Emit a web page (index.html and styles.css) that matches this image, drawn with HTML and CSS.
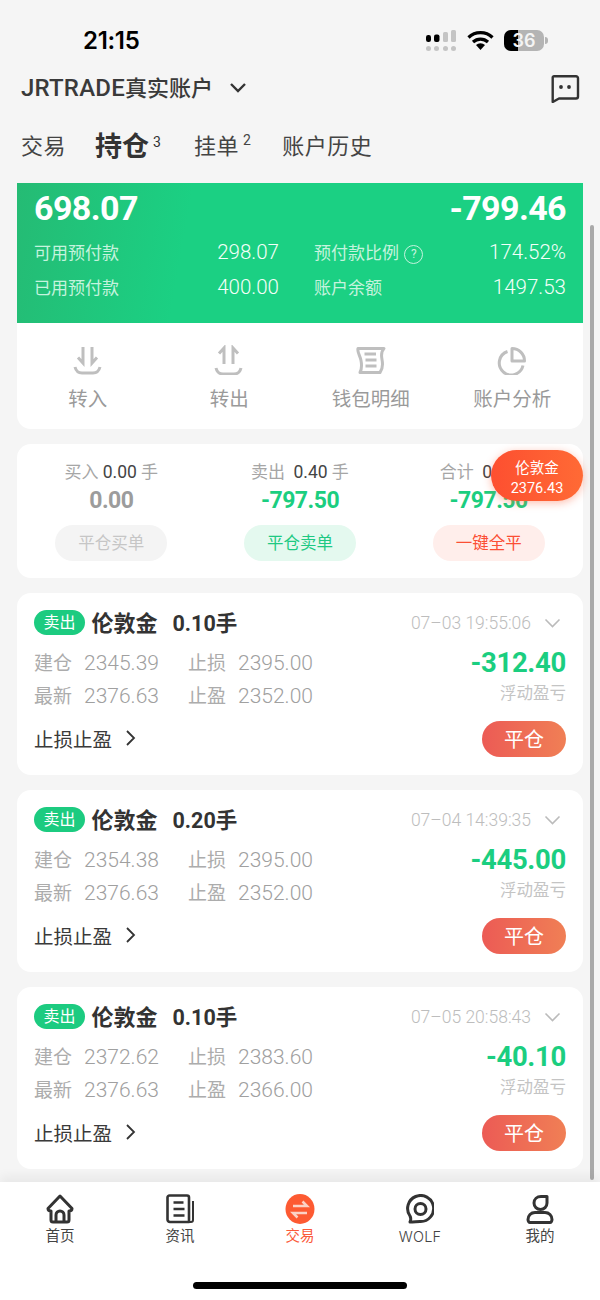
FILE: index.html
```html
<!DOCTYPE html>
<html lang="zh">
<head>
<meta charset="utf-8">
<title>JRTRADE</title>
<link rel="stylesheet" href="styles.css">
</head>
<body>
<div class="phone">
  <div class="status">
    <span class="time">21:15</span>
    <div class="status-icons">
      <svg class="signal" width="30" height="21" viewBox="0 0 30 21"><g fill="#000"><rect x="0" y="5" width="5" height="7" rx="2.200"/><rect x="8" y="4.500" width="5.500" height="7.500" rx="2"/></g><g fill="#c4c4c4"><rect x="17" y="2" width="5" height="10" rx="1.500"/><rect x="25" y="0" width="5" height="12" rx="1.500"/><circle cx="2.500" cy="18.500" r="2.500"/><circle cx="10.500" cy="18.500" r="2.500"/><circle cx="19.500" cy="18.500" r="2.500"/><circle cx="27.500" cy="18.500" r="2.500"/></g></svg>
      <svg class="wifi" width="27" height="20" viewBox="0 0 27 20"><path d="M1.500 7.500a17 17 0 0 1 24 0M6 12a11 11 0 0 1 15 0" fill="none" stroke="#000" stroke-width="3.200"/><path d="M9 15a6.500 6.500 0 0 1 9 0l-4.500 5z" fill="#000"/></svg>
      <div class="battery"><span class="battery-fill"></span><span class="battery-num">36</span></div><span class="battery-cap"></span>
    </div>
  </div>

  <header class="account">
    <div class="account-name"><span class="account-text"><span class="brand">JRTRADE</span>真实账户</span>
      <svg width="18" height="12" viewBox="0 0 18 12"><path d="M2 2l7 7 7-7" fill="none" stroke="#333" stroke-width="2.400"/></svg>
    </div>
    <svg width="30" height="30" viewBox="0 0 30 30"><path d="M4 3.200h22a2 2 0 0 1 2 2v18.300a2 2 0 0 1-2 2H9l-6.300 3.500V4.500a1.300 1.300 0 0 1 1.300-1.300z" fill="none" stroke="#333" stroke-width="2.400" stroke-linejoin="round"/><circle cx="11" cy="14" r="1.900" fill="#333"/><circle cx="19" cy="14" r="1.900" fill="#333"/></svg>
  </header>

  <nav class="tabs">
    <span class="tab">交易</span>
    <span class="tab tab-active">持仓<sup>3</sup></span>
    <span class="tab tab-pending">挂单<sup>2</sup></span>
    <span class="tab">账户历史</span>
  </nav>

  <main class="content">
    <section class="account-card">
      <div class="green">
        <div class="green-top"><span>698.07</span><span>-799.46</span></div>
        <div class="stats">
          <div class="stat"><span class="stat-label">可用预付款</span><span>298.07</span></div>
          <div class="stat"><span class="stat-label">预付款比例 <i class="help">?</i></span><span>174.52%</span></div>
          <div class="stat"><span class="stat-label">已用预付款</span><span>400.00</span></div>
          <div class="stat"><span class="stat-label">账户余额</span><span>1497.53</span></div>
        </div>
      </div>
      <div class="actions">
        <div class="action">
          <svg width="30" height="30" viewBox="0 0 30 30" fill="none" stroke="#bfbfbf" stroke-width="3"><path d="M2 22c1 4 4 6 7 6h11c3 0 6-2 7-6"/><path d="M10 2v16L5 12.500M19 2v16l5-5.500"/></svg>
          <span>转入</span>
        </div>
        <div class="action">
          <svg width="30" height="30" viewBox="0 0 30 30" fill="none" stroke="#bfbfbf" stroke-width="3"><path d="M2 23c1 4 4 6 7 6h11c3 0 6-2 7-6"/><path d="M10 19V3L5 8.500M19 19V3l5 5.500"/></svg>
          <span>转出</span>
        </div>
        <div class="action">
          <svg width="30" height="30" viewBox="0 0 30 30" fill="none" stroke="#bfbfbf" stroke-width="3" stroke-linejoin="round"><path d="M2 3.500h26c-3 3-3 6-2 11s1 9-2 13H4c2-4 2-7 1-12S1 7 2 3.500z"/><path d="M8.500 9h11.500M9.500 15h11M9.500 21h11"/></svg>
          <span>钱包明细</span>
        </div>
        <div class="action">
          <svg width="30" height="30" viewBox="0 0 30 30" fill="none" stroke="#bfbfbf" stroke-width="3" stroke-linejoin="round"><path d="M10.500 6.500a12 12 0 1 0 15.500 14"/><path d="M15 3.500a12.500 12.500 0 0 1 12.500 12.500H15z"/></svg>
          <span>账户分析</span>
        </div>
      </div>
    </section>

    <section class="summary">
      <div class="sum-col">
        <div class="sum-title">买入 <b>0.00</b> 手</div>
        <div class="sum-value sum-grey">0.00</div>
        <div class="sum-btn btn-grey">平仓买单</div>
      </div>
      <div class="sum-col">
        <div class="sum-title">卖出&nbsp; <b>0.40</b> 手</div>
        <div class="sum-value">-797.50</div>
        <div class="sum-btn btn-green">平仓卖单</div>
      </div>
      <div class="sum-col">
        <div class="sum-title">合计&nbsp; <b>0.40</b> 手</div>
        <div class="sum-value">-797.50</div>
        <div class="sum-btn btn-red">一键全平</div>
      </div>
      <div class="float-quote"><span>伦敦金</span><span>2376.43</span></div>
    </section>

    <article class="order">
      <div class="order-head">
        <span class="tag">卖出</span><span class="order-name">伦敦金</span><span class="order-lot">0.10手</span>
        <span class="order-time">07–03 19:55:06</span>
        <svg class="order-chevron" width="17" height="10" viewBox="0 0 17 10"><path d="M1.500 1.500l7 7 7-7" fill="none" stroke="#bbb" stroke-width="1.600"/></svg>
      </div>
      <div class="order-body">
        <div class="order-grid">
          <span><em>建仓</em>2345.39</span><span><em>止损</em>2395.00</span>
          <span><em>最新</em>2376.63</span><span><em>止盈</em>2352.00</span>
        </div>
        <div class="order-pl"><strong>-312.40</strong><span>浮动盈亏</span></div>
      </div>
      <div class="order-foot">
        <span class="sl">止损止盈<svg width="12" height="18" viewBox="0 0 12 18"><path d="M2 2l7 7-7 7" fill="none" stroke="#333" stroke-width="1.800"/></svg></span>
        <span class="close-btn">平仓</span>
      </div>
    </article>

    <article class="order">
      <div class="order-head">
        <span class="tag">卖出</span><span class="order-name">伦敦金</span><span class="order-lot">0.20手</span>
        <span class="order-time">07–04 14:39:35</span>
        <svg class="order-chevron" width="17" height="10" viewBox="0 0 17 10"><path d="M1.500 1.500l7 7 7-7" fill="none" stroke="#bbb" stroke-width="1.600"/></svg>
      </div>
      <div class="order-body">
        <div class="order-grid">
          <span><em>建仓</em>2354.38</span><span><em>止损</em>2395.00</span>
          <span><em>最新</em>2376.63</span><span><em>止盈</em>2352.00</span>
        </div>
        <div class="order-pl"><strong>-445.00</strong><span>浮动盈亏</span></div>
      </div>
      <div class="order-foot">
        <span class="sl">止损止盈<svg width="12" height="18" viewBox="0 0 12 18"><path d="M2 2l7 7-7 7" fill="none" stroke="#333" stroke-width="1.800"/></svg></span>
        <span class="close-btn">平仓</span>
      </div>
    </article>

    <article class="order">
      <div class="order-head">
        <span class="tag">卖出</span><span class="order-name">伦敦金</span><span class="order-lot">0.10手</span>
        <span class="order-time">07–05 20:58:43</span>
        <svg class="order-chevron" width="17" height="10" viewBox="0 0 17 10"><path d="M1.500 1.500l7 7 7-7" fill="none" stroke="#bbb" stroke-width="1.600"/></svg>
      </div>
      <div class="order-body">
        <div class="order-grid">
          <span><em>建仓</em>2372.62</span><span><em>止损</em>2383.60</span>
          <span><em>最新</em>2376.63</span><span><em>止盈</em>2366.00</span>
        </div>
        <div class="order-pl"><strong>-40.10</strong><span>浮动盈亏</span></div>
      </div>
      <div class="order-foot">
        <span class="sl">止损止盈<svg width="12" height="18" viewBox="0 0 12 18"><path d="M2 2l7 7-7 7" fill="none" stroke="#333" stroke-width="1.800"/></svg></span>
        <span class="close-btn">平仓</span>
      </div>
    </article>
  </main>
  <div class="scrollbar"></div>

  <footer class="tabbar">
    <div class="tabbar-items">
      <div class="bar-item">
        <svg width="28" height="30" viewBox="0 0 28 30" fill="none" stroke="#333" stroke-width="3" stroke-linejoin="round"><path d="M14 2L2 14.500c0 1.500 1 2.500 3 2.500v9c0 1.500 1 2 2 2h14c1 0 2-.5 2-2v-9c2 0 3-1 3-2.500z"/><path d="M10 28v-7a4 4 0 0 1 8 0v7"/></svg>
        <span>首页</span>
      </div>
      <div class="bar-item">
        <svg width="28" height="30" viewBox="0 0 28 30" fill="none" stroke="#333" stroke-width="2.600" stroke-linejoin="round"><path d="M23 28H4a2.500 2.500 0 0 1-2.500-2.500v-22A2 2 0 0 1 3.500 1.500H21a2 2 0 0 1 2 2z"/><path d="M27 7v19a2 2 0 0 1-2 2H23" stroke-width="2"/><path d="M7.500 8.500h10M7.500 15h11M7.500 21.500h11" stroke-width="2.400"/></svg>
        <span>资讯</span>
      </div>
      <div class="bar-item bar-active">
        <svg width="30" height="30" viewBox="0 0 30 30"><ellipse cx="15" cy="15" rx="14.500" ry="15" fill="#fd5a32"/><path d="M8 12h14l-4.500-4.500M22 19H8l4.500 4.500" fill="none" stroke="#fbd2c6" stroke-width="2.500"/></svg>
        <span>交易</span>
      </div>
      <div class="bar-item">
        <svg width="28" height="30" viewBox="0 0 28 30" fill="none" stroke="#333" stroke-width="3"><path d="M4 28c1-2 1-4 0-6A13 13 0 1 1 14 27.500c-3 0-6 .5-10 .5z" stroke-linejoin="round"/><circle cx="14.500" cy="15" r="5.500"/></svg>
        <span class="wolf">WOLF</span>
      </div>
      <div class="bar-item">
        <svg width="28" height="30" viewBox="0 0 28 30" fill="none" stroke="#333" stroke-width="3" stroke-linejoin="round"><path d="M21 2.500V9a6.500 6.500 0 1 1-13 0c0-4 3-6.500 7-6.500z"/><path d="M9 18.500h10c4 0 7 3 7 7 0 1.500-1 3-2 3H4c-1 0-2-1.500-2-3 0-4 3-7 7-7z"/></svg>
        <span>我的</span>
      </div>
    </div>
    <div class="home-indicator"></div>
  </footer>
</div>
</body>
</html>
```
FILE: styles.css
```css
* { box-sizing: border-box; }
html, body { margin: 0; padding: 0; }
body { font-family: "Roboto", "Noto Sans CJK SC", sans-serif; background: #f5f5f5; color: #333; }
.phone { position: relative; width: 600px; height: 1300px; overflow: hidden; display: flex; flex-direction: column; background: #f5f5f5; }

.status { height: 62px; padding: 18px 52px 0 83px; display: flex; justify-content: space-between; align-items: center; }
.time { font-family: "Inter", sans-serif; font-size: 24px; font-weight: 600; color: #000; letter-spacing: -.3px; }
.status-icons { display: flex; align-items: center; }
.signal { margin-right: 11px; }
.wifi { margin-right: 10px; }
.battery { position: relative; width: 40px; height: 21px; border-radius: 7px; background: #b4b4b4; overflow: hidden; display: flex; align-items: center; justify-content: center; }
.battery-fill { position: absolute; left: 0; top: 0; bottom: 0; width: 14px; background: #000; }
.battery-num { position: relative; color: #f4f4f4; font-size: 18px; font-weight: 600; font-family: "Inter", sans-serif; }
.battery-cap { width: 3px; height: 7px; background: #b4b4b4; border-radius: 0 3px 3px 0; margin-left: 1px; }

.account { height: 52px; padding: 0 20px 0 21px; display: flex; justify-content: space-between; align-items: center; }
.account-name { display: flex; align-items: center; gap: 16px; font-size: 22px; font-weight: 500; color: #3a3a3a; }
.account-text { margin-bottom: 4px; }
.brand { font-size: 24px; letter-spacing: .2px; }

.tabs { height: 64px; padding: 0 21px 4px; display: flex; align-items: center; gap: 30px; }
.tab { font-size: 22px; color: #444; letter-spacing: .5px; }
.tab sup { font-size: 14px; font-weight: 400; margin-left: 4px; vertical-align: 9px; line-height: 0; }
.tab-active { font-size: 27px; font-weight: 700; color: #333; letter-spacing: 0; margin-left: -1px; margin-right: 3px; }
.tab-pending { margin-right: 1px; }

.content { flex: 1; padding: 5px 17px 0; display: flex; flex-direction: column; gap: 15px; }

.account-card { height: 246px; background: #fff; border-radius: 0 0 14px 14px; overflow: hidden; }
.green { height: 140px; padding: 6px 17px 0; background: linear-gradient(100deg, #25bb74 0%, #1bd083 30%, #1bd083 100%); color: #fff; }
.green-top { display: flex; justify-content: space-between; font-size: 34px; font-weight: 700; line-height: 38px; letter-spacing: -.6px; }
.stats { margin-top: 7px; display: grid; grid-template-columns: 245px 1fr; column-gap: 35px; }
.stat { height: 35px; display: flex; justify-content: space-between; align-items: center; font-size: 20.500px; font-weight: 300; color: #f4fff9; }
.stat-label { font-size: 17px; font-weight: 400; color: #c5f3de; }
.help { display: inline-block; width: 19px; height: 19px; border: 1px solid #c5f3de; border-radius: 50%; font-style: normal; font-size: 12px; text-align: center; line-height: 17px; margin-left: 1px; vertical-align: 1px; }

.actions { height: 106px; padding-top: 22px; display: grid; grid-template-columns: repeat(4, 1fr); }
.action { display: flex; flex-direction: column; align-items: center; gap: 11px; font-size: 19.500px; color: #9a9a9a; }
.action span { line-height: 28px; }

.summary { position: relative; height: 134px; background: #fff; border-radius: 14px; display: grid; grid-template-columns: repeat(3, 1fr); padding: 17px 0 0; }
.sum-col { display: flex; flex-direction: column; align-items: center; }
.sum-title { font-size: 17px; color: #a6a6a6; line-height: 22px; }
.sum-title b { color: #444; font-weight: 400; font-size: 17.500px; }
.sum-value { font-size: 23px; font-weight: 700; color: #1bce80; line-height: 30px; margin-top: 3px; letter-spacing: -.5px; }
.sum-grey { color: #9c9c9c; }
.sum-btn { width: 112px; height: 36px; margin-top: 9px; border-radius: 18px; font-size: 16.500px; line-height: 37px; text-align: center; }
.btn-grey { background: #f4f4f4; color: #c6c6c6; }
.btn-green { background: #e4f9ef; color: #1ec983; }
.btn-red { background: #ffeeeb; color: #fb4f34; }
.float-quote { position: absolute; right: 0; top: 6px; width: 92px; height: 51px; padding-top: 7px; border-radius: 26px; background: linear-gradient(90deg, #fd4f30, #ff6a35); color: #fff; font-size: 14.500px; display: flex; flex-direction: column; align-items: center; justify-content: center; box-shadow: 0 2px 8px rgba(253, 90, 50, .4); line-height: 20px; }

.order { height: 182px; background: #fff; border-radius: 14px; padding: 15px 17px 0; }
.order-head { display: flex; align-items: center; height: 29px; }
.tag { width: 51px; height: 25px; background: #1ccb80; color: #fff; border-radius: 13px; font-size: 16px; line-height: 25px; text-align: center; margin-right: 6.500px; }
.order-name { font-size: 22px; font-weight: 700; color: #333; margin: 0 15px 4px 0; }
.order-lot { font-size: 21.500px; font-weight: 700; color: #333; margin-bottom: 3px; }
.order-time { margin-left: auto; font-size: 17.500px; font-weight: 300; color: #bdbdbd; margin-right: 13px; }
.order-chevron { margin-right: 5px; }
.order-body { display: flex; justify-content: space-between; margin-top: 10px; }
.order-grid { display: grid; grid-template-columns: 154px auto; font-size: 21px; font-weight: 300; color: #a0a0a0; }
.order-grid span { line-height: 33px; }
.order-grid em { font-style: normal; font-size: 19px; font-weight: 400; color: #acacac; margin-right: 12px; }
.order-pl { display: flex; flex-direction: column; align-items: flex-end; }
.order-pl strong { font-size: 27.500px; font-weight: 700; color: #1bce80; line-height: 32px; letter-spacing: -.3px; }
.order-pl span { font-size: 16.500px; color: #c4c4c4; line-height: 29px; }
.order-foot { display: flex; justify-content: space-between; align-items: center; margin-top: 8px; }
.sl { display: flex; align-items: center; gap: 13px; padding-bottom: 2px; font-size: 19.500px; color: #3a3a3a; }
.close-btn { width: 84px; height: 36px; border-radius: 18px; background: linear-gradient(90deg, #ec5b55, #f07f55); color: #fff; font-size: 20px; line-height: 38px; text-align: center; }

.scrollbar { position: absolute; left: 590px; top: 225px; width: 4px; height: 955px; border-radius: 2px; background: #a9a9a9; }

.tabbar { position: relative; height: 118px; background: #fff; box-shadow: 0 -6px 10px rgba(0,0,0,.05); }
.tabbar-items { display: grid; grid-template-columns: repeat(5, 1fr); padding: 12px 0 0; }
.bar-item { display: flex; flex-direction: column; align-items: center; font-size: 14.500px; color: #444; line-height: 20px; gap: 3px; }
.wolf { font-family: "Inter", sans-serif; font-weight: 300; letter-spacing: .2px; }
.bar-active { color: #fb5a3a; }
.home-indicator { position: absolute; left: 193px; bottom: 11px; width: 214px; height: 7px; border-radius: 4px; background: #000; }
```
